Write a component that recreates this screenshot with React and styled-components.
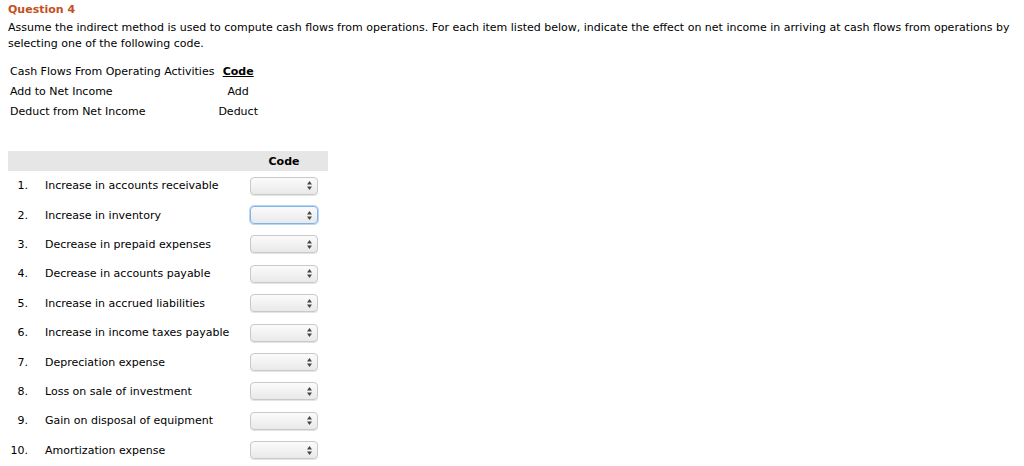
import React from "react";
import styled, { createGlobalStyle } from "styled-components";

const GlobalStyle = createGlobalStyle`
  body {
    margin: 0;
    background: #ffffff;
    font-family: "DejaVu Sans", Verdana, sans-serif;
    font-size: 11px;
    color: #000000;
  }
`;

const Page = styled.div`
  padding: 3px 8px 0 8px;
`;

const Heading = styled.div`
  color: #c4501c;
  font-weight: bold;
  font-size: 11px;
  line-height: 14px;
`;

const Prompt = styled.p`
  margin: 3px 0 0 0;
  line-height: 16px;
`;

const CodeTable = styled.table`
  border-collapse: collapse;
  margin-top: 9px;
`;

const CodeCell = styled.td`
  height: 20px;
  padding: 0 2px;
  text-align: ${(p) => (p.$center ? "center" : "left")};
  font-weight: ${(p) => (p.$bold ? "bold" : "normal")};
  text-decoration: ${(p) => (p.$bold ? "underline" : "none")};
`;

const ItemTable = styled.table`
  border-collapse: collapse;
  width: 320px;
  margin-top: 30px;
`;

const HeaderRow = styled.tr`
  background: #e6e6e6;
  height: 20px;
`;

const HeaderCell = styled.th`
  padding: 0 ${(p) => (p.$code ? "10px" : "0")} 0 0;
  font-weight: bold;
  text-align: center;
`;

const Row = styled.tr`
  height: 29.4px;
`;

const NumCell = styled.td`
  width: 20px;
  padding: 0;
  text-align: right;
`;

const TextCell = styled.td`
  padding: 0 0 0 17px;
`;

const SelectCell = styled.td`
  width: 68px;
  padding: 0 10px 0 0;
`;

const Select = styled.div`
  box-sizing: border-box;
  width: 68px;
  height: 18px;
  border: 1px solid ${(p) => (p.$focus ? "#7eb4ea" : "#c9c9c9")};
  box-shadow: ${(p) => (p.$focus ? "0 0 0 1px #b9d7f6" : "0 1px 0 #e4e4e4")};
  border-radius: 4px;
  background: linear-gradient(#fbfbfb, #e9e9e9);
  display: flex;
  align-items: center;
  justify-content: flex-end;
  padding-right: 5px;
`;

const Arrows = () => (
  <svg width="5" height="9" viewBox="0 0 5 9">
    <path d="M2.5 0 L5 3.5 L0 3.5 Z" fill="#444" />
    <path d="M2.5 9 L5 5.5 L0 5.5 Z" fill="#444" />
  </svg>
);

const items = [
  "Increase in accounts receivable",
  "Increase in inventory",
  "Decrease in prepaid expenses",
  "Decrease in accounts payable",
  "Increase in accrued liabilities",
  "Increase in income taxes payable",
  "Depreciation expense",
  "Loss on sale of investment",
  "Gain on disposal of equipment",
  "Amortization expense",
];

export default function App() {
  return (
    <Page>
      <GlobalStyle />
      <Heading>Question 4</Heading>
      <Prompt>
        Assume the indirect method is used to compute cash flows from
        operations. For each item listed below, indicate the effect on net
        income in arriving at cash flows from operations by selecting one of
        the following code.
      </Prompt>
      <CodeTable>
        <tbody>
          <tr>
            <CodeCell>Cash Flows From Operating Activities</CodeCell>
            <CodeCell $center $bold>Code</CodeCell>
          </tr>
          <tr>
            <CodeCell>Add to Net Income</CodeCell>
            <CodeCell $center>Add</CodeCell>
          </tr>
          <tr>
            <CodeCell>Deduct from Net Income</CodeCell>
            <CodeCell $center>Deduct</CodeCell>
          </tr>
        </tbody>
      </CodeTable>
      <ItemTable>
        <tbody>
          <HeaderRow>
            <HeaderCell />
            <HeaderCell />
            <HeaderCell $code>Code</HeaderCell>
          </HeaderRow>
          {items.map((item, i) => (
            <Row key={item}>
              <NumCell>{i + 1}.</NumCell>
              <TextCell>{item}</TextCell>
              <SelectCell>
                <Select $focus={i === 1}>
                  <Arrows />
                </Select>
              </SelectCell>
            </Row>
          ))}
        </tbody>
      </ItemTable>
    </Page>
  );
}
